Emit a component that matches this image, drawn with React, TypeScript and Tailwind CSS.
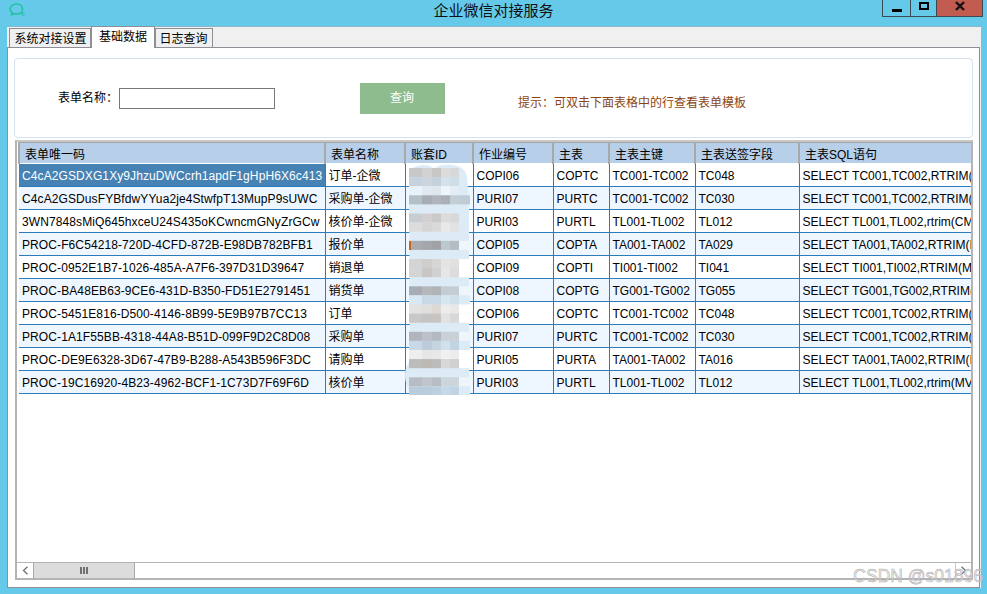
import React from "react";

const rows = [
  ["C4cA2GSDXG1Xy9JhzuDWCcrh1apdF1gHpH6X6c413", "订单-企微", "COPI06", "COPTC", "TC001-TC002", "TC048", "SELECT TC001,TC002,RTRIM("],
  ["C4cA2GSDusFYBfdwYYua2je4StwfpT13MupP9sUWC", "采购单-企微", "PURI07", "PURTC", "TC001-TC002", "TC030", "SELECT TC001,TC002,RTRIM("],
  ["3WN7848sMiQ645hxceU24S435oKCwncmGNyZrGCw", "核价单-企微", "PURI03", "PURTL", "TL001-TL002", "TL012", "SELECT TL001,TL002,rtrim(CM"],
  ["PROC-F6C54218-720D-4CFD-872B-E98DB782BFB1", "报价单", "COPI05", "COPTA", "TA001-TA002", "TA029", "SELECT TA001,TA002,RTRIM(I"],
  ["PROC-0952E1B7-1026-485A-A7F6-397D31D39647", "销退单", "COPI09", "COPTI", "TI001-TI002", "TI041", "SELECT TI001,TI002,RTRIM(M"],
  ["PROC-BA48EB63-9CE6-431D-B350-FD51E2791451", "销货单", "COPI08", "COPTG", "TG001-TG002", "TG055", "SELECT TG001,TG002,RTRIM("],
  ["PROC-5451E816-D500-4146-8B99-5E9B97B7CC13", "订单", "COPI06", "COPTC", "TC001-TC002", "TC048", "SELECT TC001,TC002,RTRIM("],
  ["PROC-1A1F55BB-4318-44A8-B51D-099F9D2C8D08", "采购单", "PURI07", "PURTC", "TC001-TC002", "TC030", "SELECT TC001,TC002,RTRIM("],
  ["PROC-DE9E6328-3D67-47B9-B288-A543B596F3DC", "请购单", "PURI05", "PURTA", "TA001-TA002", "TA016", "SELECT TA001,TA002,RTRIM(I"],
  ["PROC-19C16920-4B23-4962-BCF1-1C73D7F69F6D", "核价单", "PURI03", "PURTL", "TL001-TL002", "TL012", "SELECT TL001,TL002,rtrim(MV"],
];

const headers = ["表单唯一码", "表单名称", "账套ID", "作业编号", "主表", "主表主键", "主表送签字段", "主表SQL语句"];

// blurred-out account ids, strip by strip
const halo = "#dcebf6";
const mosaic = [
  ["#c8c8c8", "#d2d2d2", "#c9c7c5", "#dcdcdc", "#d8d8d8", "#ffffff00"],
  ["#c6d3de", "#ccd5de", "#c4d0da", "#d4e2ec", "#cfdde6", "#ffffff00"],
  ["#e8f2fa", "#e0e8f0", "#e0e6ee", "#eef6fc", "#e4ecf4", "#ffffff00"],
  ["#b4c0c8", "#a8acb4", "#b0b4bc", "#acb0b6", "#c2ced6", "#c0ccd4"],
  null,
  ["#c8cdd2", "#d4d0d0", "#cccac8", "#dcdcdc", "#d8d8d8", "#ffffff00"],
  ["#dcdcdc", "#d6d4d4", "#dadada", "#e8e8e8", "#e2e2e2", "#ffffff00"],
  null,
  ["#a8acb0", "#a4a6ab", "#a0a2a6", "#bcc8d0", "#b4bcc4", "#eef6fc"],
  null,
  ["#d4d4d4", "#d0cecc", "#d8d6d4", "#e4e4e4", "#e0e0e0", "#ffffff"],
  ["#d2d6d6", "#c8c6c4", "#d0d0d0", "#e4e6e8", "#dcdcdc", "#ffffff"],
  null,
  ["#a8acb4", "#b4b8bc", "#b0b4b8", "#c4ccd4", "#c4ccd4", "#eef6fc"],
  ["#d8e8f4", "#c8d8e4", "#c8d8e4", "#d8e6f0", "#d0e0ea", "#dcebf6"],
  ["#e4e2e0", "#e0dedc", "#dcd8d4", "#ececec", "#e8e8e8", "#ffffff"],
  ["#c8c8c8", "#c4c4c4", "#c8c4c0", "#e0e2e4", "#d8d8d8", "#ffffff"],
  null,
  ["#b0b4bc", "#bcc0c8", "#b4b8c0", "#c8d0d8", "#c8d0d8", "#eef6fc"],
  ["#c8d8e6", "#bcccda", "#c4d4e0", "#d0e0ec", "#c0d4e2", "#dcebf6"],
  ["#eeeeee", "#e6e6e6", "#e8e8e8", "#f0f0f0", "#ececec", "#ffffff"],
  ["#bcbcbc", "#bcb8b4", "#bcbcbc", "#d8d8d8", "#d0d0d0", "#ffffff"],
  null,
  ["#b8bcc4", "#c0c4cc", "#b8bcc4", "#ccd4dc", "#ccd4dc", "#eef6fc"],
  ["#b8ccdc", "#b8ccdc", "#bcd0e0", "#c4d8e8", "#c0d4e4", "#dcebf6"],
];
const cellX = [9, 22, 32, 41, 50, 59];
const cellW = [13, 10, 9, 9, 9, 11];

// sits over the account id column, origin at (400,160) of the window
const Mosaic = () => (
  <svg className="absolute left-[383px] top-[19px]" width="74" height="234" viewBox="0 0 74 234">
    <path
      d="M9 14 C9 8 16 4 24 4 C30 4 32 7 35 7 C38 4 44 3 52 4 C60 5 66 8 67 16 L69 44 L69 226 L66 233 L14 233 C8 230 5 222 5 214 C5 208 7 204 10 200 Z"
      fill={halo}
    />
    {mosaic.map((strip, i) =>
      strip
        ? strip.map((c, j) => (
            <rect key={i + "-" + j} x={cellX[j]} y={7 + i * 9.1} width={cellW[j]} height={9.1} fill={c} />
          ))
        : null
    )}
    <rect x="9" y="80" width="2" height="9" fill="#c8661e" />
  </svg>
);

const cell = "p-0 pl-[3px] pt-[2px] border-b border-r border-[#2b7cba] whitespace-nowrap overflow-hidden";

const App = () => {
  return (
    <div className="relative h-screen w-full overflow-hidden bg-[#65c9ea] flex flex-col font-['Liberation_Sans','Noto_Sans_CJK_SC',sans-serif] text-[12px] text-black">
      {/* title bar */}
      <div className="h-[26px] shrink-0 grid grid-cols-[1fr_auto_1fr] items-start">
        <div className="pl-[9px] pt-[3px]">
          <svg width="17" height="14" viewBox="0 0 17 14" fill="none" stroke="#20c4a0" strokeWidth="1.6">
            <path d="M7.5 1 C11 1 13.5 3 13.5 6 C13.5 9 11 11 7.5 11 C6.5 11 5.5 10.8 4.8 10.5 L2.6 11.8 L2.9 9.4 C1.6 8.5 1 7.3 1 6 C1 3 4 1 7.5 1 Z" />
            <path d="M12 11 L14 9.5 L15.5 10.8 L14 12.5 Z" strokeWidth="1" />
          </svg>
        </div>
        <div className="pt-[1px] text-[15px] leading-[20px] text-[#111]">企业微信对接服务</div>
        <div className="flex justify-end pr-[4px]">
          <div className="flex h-[17px] border border-t-0 border-[#3c4a52]">
            <div className="w-[27px] flex items-center justify-center pt-[4px]">
              <div className="w-[10px] h-[3px] bg-black" />
            </div>
            <div className="w-[26px] border-l border-[#3c4a52] flex items-center justify-center pb-[4px]">
              <div className="w-[10px] h-[8px] border-2 border-black" />
            </div>
            <div className="w-[46px] border-l border-[#3c4a52] bg-[#c25b50] flex items-start justify-center">
              <svg width="10" height="10" viewBox="0 0 10 10" className="mt-[1px]">
                <path d="M1 1 L9 9 M9 1 L1 9" stroke="#111" strokeWidth="2.4" />
              </svg>
            </div>
          </div>
        </div>
      </div>

      {/* window body */}
      <div className="ml-[7px] mr-[6px] mb-[6px] flex-1 flex flex-col bg-[#f0f0f0] border-t border-[#8fb6c6]">
        <div className="h-[20px] shrink-0 flex items-end pl-[2px] relative z-10">
          <div className="h-[19px] w-[82px] bg-[#f0f0f0] border border-b-0 border-[#8e8e96] flex items-center justify-center leading-none pl-[1px] pt-[1px]">系统对接设置</div>
          <div className="h-[22px] w-[64px] -mb-[1px] bg-white border border-b-0 border-[#8e8e96] flex items-center justify-center leading-none pb-[2px]">基础数据</div>
          <div className="h-[19px] w-[58px] bg-[#f0f0f0] border border-b-0 border-[#8e8e96] flex items-center justify-center leading-none pr-[1px] pt-[1px]">日志查询</div>
        </div>

        <div className="flex-1 bg-white border border-[#8e8e96] mr-[1px] px-[6px] pt-[10px] pb-[7px] flex flex-col">
          {/* search card */}
          <div className="h-[80px] shrink-0 rounded-[4px] border border-[#d5e1ec] flex items-center pl-[43px]">
            <span>{"表单名称\uFF1A"}</span>
            <input className="ml-[1px] w-[156px] h-[21px] border border-[#777] bg-white outline-none" />
            <button className="ml-[85px] w-[85px] h-[31px] bg-[#8fbc8f] text-white pr-[1px]">查询</button>
            <span className="ml-[73px] mt-[9px] text-[#8b4513]">{"提示\uFF1A可双击下面表格中的行查看表单模板"}</span>
          </div>

          {/* grid */}
          <div className="relative mt-[2px] ml-[1px] flex-1 border-2 border-[#b4b4b4] border-t-[#c8c8c8] flex flex-col overflow-hidden">
            <div className="flex-1 pl-[1px] overflow-hidden">
              <table className="table-fixed w-[1000px] border-collapse">
                <colgroup>
                  <col className="w-[306px]" />
                  <col className="w-[80px]" />
                  <col className="w-[68px]" />
                  <col className="w-[80px]" />
                  <col className="w-[56px]" />
                  <col className="w-[86px]" />
                  <col className="w-[104px]" />
                  <col className="w-[220px]" />
                </colgroup>
                <thead>
                  <tr className="h-[21px]">
                    {headers.map((h) => (
                      <th
                        key={h}
                        className="p-0 font-normal text-left align-bottom bg-[#b8cfe9] border-t border-l-2 border-b border-t-[#a4a4a4] border-l-[#a8a8a8] border-b-white pl-[5px] leading-[16px] whitespace-nowrap overflow-hidden"
                      >
                        {h}
                      </th>
                    ))}
                  </tr>
                </thead>
                <tbody>
                  {rows.map((r, i) => (
                    <tr key={r[0]} className={i % 2 === 0 ? "h-[23px] bg-white" : "h-[23px] bg-[#eef7ff]"}>
                      <td className={i === 0 ? cell + " tracking-[0.1px] bg-[#4682b4] text-white" : cell + " tracking-[0.1px]"}>{r[0]}</td>
                      <td className={cell}>{r[1]}</td>
                      <td className="p-0 border-b border-r border-[#2b7cba]" />
                      <td className={cell}>{r[2]}</td>
                      <td className={cell}>{r[3]}</td>
                      <td className={cell}>{r[4]}</td>
                      <td className={cell}>{r[5]}</td>
                      <td className="p-0 pl-[3px] pt-[2px] border-b border-[#2b7cba] whitespace-nowrap overflow-hidden">{r[6]}</td>
                    </tr>
                  ))}
                </tbody>
              </table>
            </div>

            {/* horizontal scrollbar */}
            <div className="h-[16px] shrink-0 border-t border-[#b4b4b4] flex bg-white">
              <div className="w-[16px] flex items-center justify-center">
                <svg width="7" height="9" viewBox="0 0 7 9" fill="none" stroke="#707070" strokeWidth="1.3">
                  <path d="M5.5 .8 L1.5 4.5 L5.5 8.2" />
                </svg>
              </div>
              <div className="w-[102px] bg-[#dcdcdc] border border-t-0 border-b-0 border-[#a8a8a8] flex items-center justify-center gap-[1px]">
                <div className="w-[2px] h-[7px] bg-[#707070]" />
                <div className="w-[2px] h-[7px] bg-[#707070]" />
                <div className="w-[2px] h-[7px] bg-[#707070]" />
              </div>
              <div className="flex-1" />
              <div className="w-[16px] border-l border-[#c8c8c8] flex items-center justify-center">
                <svg width="7" height="9" viewBox="0 0 7 9" fill="none" stroke="#707070" strokeWidth="1.3">
                  <path d="M1.5 .8 L5.5 4.5 L1.5 8.2" />
                </svg>
              </div>
            </div>
            <Mosaic />
          </div>
        </div>
      </div>

      {/* watermark */}
      <div className="absolute right-[4px] bottom-[7px] text-[17.5px] leading-[22px] text-[#e6e6e6]/70 [-webkit-text-stroke:0.5px_#a8a8a8]">
        CSDN @s01896
      </div>
    </div>
  );
};

export default App;
